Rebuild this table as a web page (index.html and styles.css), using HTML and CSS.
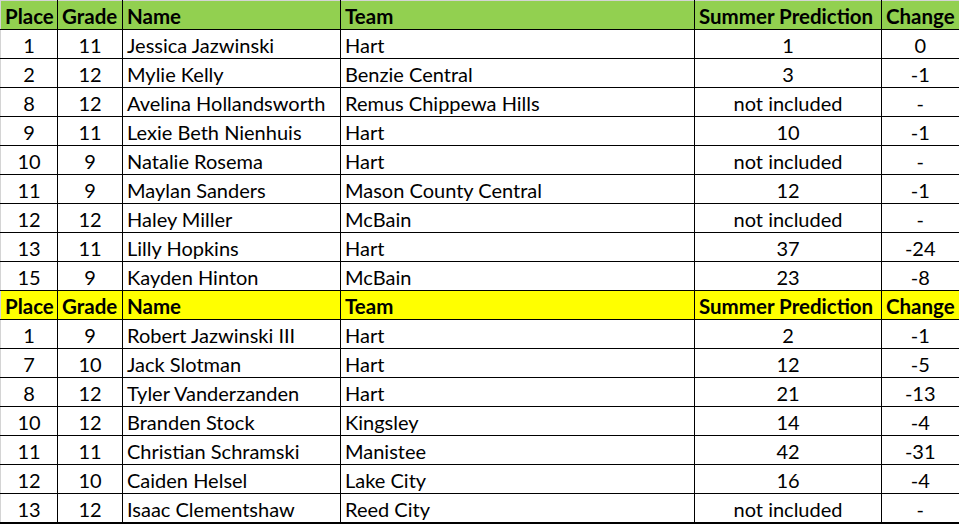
FILE: index.html
```html
<!DOCTYPE html>
<html>
<head>
<meta charset="utf-8">
<link rel="stylesheet" href="styles.css">
</head>
<body>
<table class="sheet">
  <colgroup>
    <col class="c-place"><col class="c-grade"><col class="c-name"><col class="c-team"><col class="c-pred"><col class="c-change">
  </colgroup>
  <tbody>
    <tr class="head green"><th>Place</th><th>Grade</th><th>Name</th><th>Team</th><th>Summer Prediction</th><th>Change</th></tr>
    <tr><td class="ctr">1</td><td class="ctr">11</td><td>Jessica Jazwinski</td><td>Hart</td><td class="ctr">1</td><td class="ctr">0</td></tr>
    <tr><td class="ctr">2</td><td class="ctr">12</td><td>Mylie Kelly</td><td>Benzie Central</td><td class="ctr">3</td><td class="ctr">-1</td></tr>
    <tr><td class="ctr">8</td><td class="ctr">12</td><td>Avelina Hollandsworth</td><td>Remus Chippewa Hills</td><td class="ctr">not included</td><td class="ctr">-</td></tr>
    <tr><td class="ctr">9</td><td class="ctr">11</td><td>Lexie Beth Nienhuis</td><td>Hart</td><td class="ctr">10</td><td class="ctr">-1</td></tr>
    <tr><td class="ctr">10</td><td class="ctr">9</td><td>Natalie Rosema</td><td>Hart</td><td class="ctr">not included</td><td class="ctr">-</td></tr>
    <tr><td class="ctr">11</td><td class="ctr">9</td><td>Maylan Sanders</td><td>Mason County Central</td><td class="ctr">12</td><td class="ctr">-1</td></tr>
    <tr><td class="ctr">12</td><td class="ctr">12</td><td>Haley Miller</td><td>McBain</td><td class="ctr">not included</td><td class="ctr">-</td></tr>
    <tr><td class="ctr">13</td><td class="ctr">11</td><td>Lilly Hopkins</td><td>Hart</td><td class="ctr">37</td><td class="ctr">-24</td></tr>
    <tr><td class="ctr">15</td><td class="ctr">9</td><td>Kayden Hinton</td><td>McBain</td><td class="ctr">23</td><td class="ctr">-8</td></tr>
    <tr class="head yellow"><th>Place</th><th>Grade</th><th>Name</th><th>Team</th><th>Summer Prediction</th><th>Change</th></tr>
    <tr><td class="ctr">1</td><td class="ctr">9</td><td>Robert Jazwinski III</td><td>Hart</td><td class="ctr">2</td><td class="ctr">-1</td></tr>
    <tr><td class="ctr">7</td><td class="ctr">10</td><td>Jack Slotman</td><td>Hart</td><td class="ctr">12</td><td class="ctr">-5</td></tr>
    <tr><td class="ctr">8</td><td class="ctr">12</td><td>Tyler Vanderzanden</td><td>Hart</td><td class="ctr">21</td><td class="ctr">-13</td></tr>
    <tr><td class="ctr">10</td><td class="ctr">12</td><td>Branden Stock</td><td>Kingsley</td><td class="ctr">14</td><td class="ctr">-4</td></tr>
    <tr><td class="ctr">11</td><td class="ctr">11</td><td>Christian Schramski</td><td>Manistee</td><td class="ctr">42</td><td class="ctr">-31</td></tr>
    <tr><td class="ctr">12</td><td class="ctr">10</td><td>Caiden Helsel</td><td>Lake City</td><td class="ctr">16</td><td class="ctr">-4</td></tr>
    <tr class="last"><td class="ctr">13</td><td class="ctr">12</td><td>Isaac Clementshaw</td><td>Reed City</td><td class="ctr">not included</td><td class="ctr">-</td></tr>
  </tbody>
</table>
</body>
</html>
```

FILE: styles.css
```css
html, body {
  margin: 0;
  padding: 0;
  background: #ffffff;
}
.sheet {
  border-collapse: collapse;
  table-layout: fixed;
  width: 959px;
  font-family: Lato, "Noto Sans", sans-serif;
  font-size: 20px;
  color: #000;
}
.c-place { width: 57px; }
.c-grade { width: 65px; }
.c-name { width: 218px; }
.c-team { width: 354px; }
.c-pred { width: 187px; }
.c-change { width: 78px; }
.sheet th, .sheet td {
  border: 1px solid #000;
  height: 27px;
  padding: 0 0 1px 4px;
  vertical-align: bottom;
  text-align: left;
  white-space: nowrap;
  overflow: hidden;
  line-height: 24px;
}
.sheet td.ctr {
  text-align: center;
  padding-left: 0;
}
.sheet th {
  font-weight: bold;
  font-size: 20.5px;
}
.green th { background: #92d050; }
.yellow th { background: #ffff00; }
.sheet tr:first-child th { border-top-color: #d4d4d4; }
.sheet tr > :first-child { border-left-color: #d4d4d4; }
.sheet tr > :last-child { border-right: 2px solid #000; }
.sheet tr.last td { border-bottom: 2px solid #000; }
```
